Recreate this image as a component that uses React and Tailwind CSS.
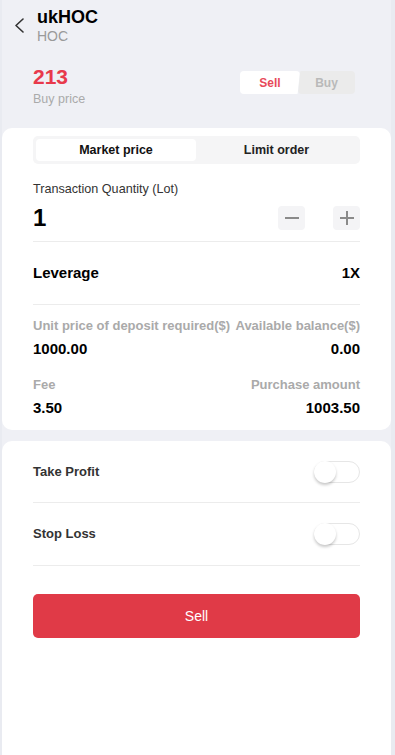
import React from "react";

function Toggle() {
  return (
    <div className="relative w-[46px] h-[22px] rounded-full border border-[#e6e6e6] bg-white">
      <div className="absolute left-[-1px] top-[-1px] w-[22px] h-[22px] rounded-full bg-white shadow-[0_2px_3px_rgba(0,0,0,0.22)]" />
    </div>
  );
}

export default function App() {
  return (
    <div className="relative w-[395px] h-[755px] overflow-hidden bg-[#e9ebf1] font-['Liberation_Sans',Arial,sans-serif]">
      <div className="ml-[2px] w-[389px] h-full bg-[#eff0f5] flex flex-col">
        {/* Header */}
        <div className="h-[128px] relative">
          <div className="flex items-start pt-[7px]">
            <svg className="ml-[10px] mt-[10px]" width="16" height="16" viewBox="0 0 16 16" fill="none">
              <path d="M11 2 L4 8.5 L11 15" stroke="#333" strokeWidth="1.6" strokeLinecap="round" strokeLinejoin="round" />
            </svg>
            <div className="ml-[9px] flex flex-col">
              <div className="text-[18px] leading-[21px] font-bold text-black">ukHOC</div>
              <div className="text-[14px] leading-[16px] text-[#9a9a9a]">HOC</div>
            </div>
          </div>
          <div className="flex items-start justify-between pl-[31px] pr-[36px] mt-[22px]">
            <div className="flex flex-col">
              <div className="text-[21px] leading-[22px] font-bold text-[#e8394b]">213</div>
              <div className="text-[12.5px] leading-[14px] mt-[4px] text-[#aaaaaa]">Buy price</div>
            </div>
            <div className="flex mt-[5px] h-[23px]">
              <div className="w-[60px] bg-white rounded-[4px] flex items-center justify-center text-[12px] font-bold text-[#e8495a] [clip-path:polygon(0_0,100%_0,96%_100%,0_100%)]">
                Sell
              </div>
              <div className="w-[57px] -ml-[2px] bg-[#ebebeb] rounded-[4px] flex items-center justify-center text-[12px] font-bold text-[#b9b9b9] [clip-path:polygon(4%_0,100%_0,100%_100%,0_100%)]">
                Buy
              </div>
            </div>
          </div>
        </div>

        {/* Card 1 */}
        <div className="bg-white rounded-[10px] px-[31px] pt-[8px] pb-[15px]">
          <div className="h-[28px] bg-[#f5f5f6] rounded-[5px] p-[3px] flex">
            <div className="w-[160px] bg-white rounded-[4px] flex items-center justify-center text-[12.5px] font-bold text-[#111]">
              Market price
            </div>
            <div className="flex-1 flex items-center justify-center text-[12.5px] font-bold text-[#222]">
              Limit order
            </div>
          </div>
          <div className="mt-[18px] text-[12.6px] leading-[14px] text-[#333]">Transaction Quantity (Lot)</div>
          <div className="flex items-center justify-between mt-[9px] h-[25px]">
            <div className="text-[24px] font-bold text-black leading-[25px]">1</div>
            <div className="flex gap-[28px] items-center">
              <div className="w-[27px] h-[24px] rounded-[4px] bg-[#f4f4f6] flex items-center justify-center">
                <div className="w-[14px] h-[2px] bg-[#8a8a8a]" />
              </div>
              <div className="w-[27px] h-[24px] rounded-[4px] bg-[#f4f4f6] flex items-center justify-center relative">
                <div className="w-[14px] h-[2px] bg-[#8a8a8a]" />
                <div className="absolute w-[2px] h-[14px] bg-[#8a8a8a]" />
              </div>
            </div>
          </div>
          <div className="mt-[11px] h-px bg-[#ececec]" />
          <div className="h-[62px] flex items-center justify-between text-[15px] font-bold text-black">
            <span>Leverage</span>
            <span>1X</span>
          </div>
          <div className="h-px bg-[#ececec]" />
          <div className="mt-[14px] flex justify-between text-[13px] font-bold text-[#aaaaaa] leading-[14px]">
            <span>Unit price of deposit required($)</span>
            <span>Available balance($)</span>
          </div>
          <div className="mt-[8px] flex justify-between text-[15px] font-bold text-black leading-[15px]">
            <span>1000.00</span>
            <span>0.00</span>
          </div>
          <div className="mt-[22px] flex justify-between text-[13px] font-bold text-[#aaaaaa] leading-[14px]">
            <span>Fee</span>
            <span>Purchase amount</span>
          </div>
          <div className="mt-[8px] flex justify-between text-[15px] font-bold text-black leading-[15px]">
            <span>3.50</span>
            <span>1003.50</span>
          </div>
        </div>

        {/* Card 2 */}
        <div className="mt-[11px] flex-1 bg-white rounded-t-[10px] px-[31px]">
          <div className="h-[61px] flex items-center justify-between">
            <span className="text-[13px] font-bold text-[#333]">Take Profit</span>
            <Toggle />
          </div>
          <div className="h-px bg-[#ececec]" />
          <div className="h-[62px] flex items-center justify-between">
            <span className="text-[13px] font-bold text-[#333]">Stop Loss</span>
            <Toggle />
          </div>
          <div className="h-px bg-[#ececec]" />
          <div className="mt-[28px] h-[44px] rounded-[5px] bg-[#e03a47] flex items-center justify-center text-[14px] text-white">
            Sell
          </div>
        </div>
      </div>
    </div>
  );
}
